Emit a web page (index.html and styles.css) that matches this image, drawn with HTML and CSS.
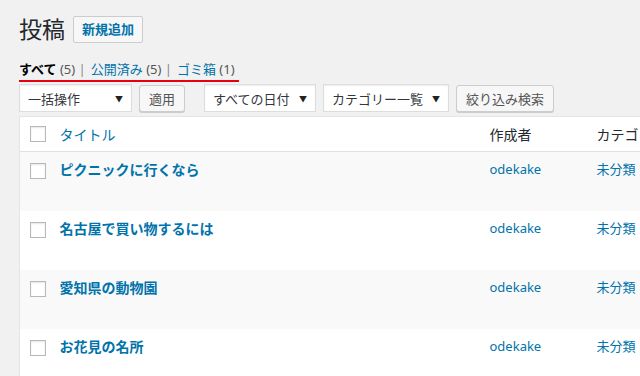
FILE: index.html
```html
<!DOCTYPE html>
<html lang="ja">
<head>
    <meta charset="UTF-8">
    <meta name="viewport" content="width=device-width, initial-scale=1.0">
    <title>投稿</title>
    <link rel="stylesheet" href="styles.css">
</head>
<body>
    <div class="wrap">
        <div class="page-head">
            <h1>投稿</h1>
            <a class="add-new" href="#">新規追加</a>
        </div>

        <ul class="subsubsub">
            <li><a class="current" href="#">すべて <span class="count">(5)</span></a> |</li>
            <li><a href="#">公開済み <span class="count">(5)</span></a> |</li>
            <li><a href="#">ゴミ箱 <span class="count">(1)</span></a></li>
        </ul>

        <div class="tablenav">
            <div class="actions">
                <div class="select bulk">一括操作<span class="arrow">▼</span></div>
                <button class="button">適用</button>
            </div>
            <div class="actions">
                <div class="select dates">すべての日付<span class="arrow">▼</span></div>
                <div class="select cats">カテゴリー一覧<span class="arrow">▼</span></div>
                <button class="button">絞り込み検索</button>
            </div>
        </div>

        <table class="posts">
            <colgroup>
                <col class="col-cb">
                <col class="col-title">
                <col class="col-author">
                <col class="col-cat">
            </colgroup>
            <thead>
                <tr>
                    <th class="check"><span class="cb"></span></th>
                    <th><a href="#">タイトル</a></th>
                    <th>作成者</th>
                    <th>カテゴリー</th>
                </tr>
            </thead>
            <tbody>
                <tr class="alt">
                    <td class="check"><span class="cb"></span></td>
                    <td><a class="row-title" href="#">ピクニックに行くなら</a></td>
                    <td><a href="#">odekake</a></td>
                    <td><a href="#">未分類</a></td>
                </tr>
                <tr>
                    <td class="check"><span class="cb"></span></td>
                    <td><a class="row-title" href="#">名古屋で買い物するには</a></td>
                    <td><a href="#">odekake</a></td>
                    <td><a href="#">未分類</a></td>
                </tr>
                <tr class="alt">
                    <td class="check"><span class="cb"></span></td>
                    <td><a class="row-title" href="#">愛知県の動物園</a></td>
                    <td><a href="#">odekake</a></td>
                    <td><a href="#">未分類</a></td>
                </tr>
                <tr>
                    <td class="check"><span class="cb"></span></td>
                    <td><a class="row-title" href="#">お花見の名所</a></td>
                    <td><a href="#">odekake</a></td>
                    <td><a href="#">未分類</a></td>
                </tr>
            </tbody>
        </table>
    </div>
</body>
</html>
```

FILE: styles.css
```css
body {
    margin: 0;
    background-color: #f1f1f1;
    color: #23282d;
    font-family: "Noto Sans", "Noto Sans CJK JP", sans-serif;
    font-size: 13px;
    overflow: hidden;
}

a {
    color: #0073aa;
    text-decoration: none;
}

.wrap {
    padding: 16px 0 0 19px;
    width: 720px;
}

.page-head {
    display: flex;
    align-items: center;
    gap: 8px;
    height: 27px;
}

h1 {
    margin: 0;
    font-size: 23px;
    font-weight: 400;
    line-height: 27px;
}

.add-new {
    display: inline-block;
    height: 25px;
    line-height: 25px;
    padding: 0 8px;
    border: 1px solid #ccc;
    border-radius: 2px;
    background-color: #f7f7f7;
    font-size: 13px;
    font-weight: 700;
}

.subsubsub {
    display: inline-flex;
    gap: 5px;
    margin: 17px 0 0;
    padding: 0 4px 2px 0;
    list-style: none;
    line-height: 18px;
    color: #888;
    border-bottom: 2px solid #e60012;
}

.subsubsub .current {
    color: #000;
    font-weight: 700;
}

.subsubsub .count {
    color: #555;
    font-weight: 400;
}

.tablenav {
    display: flex;
    gap: 19px;
    margin-top: 2px;
    height: 28px;
}

.actions {
    display: flex;
    gap: 7px;
}

.select {
    display: flex;
    justify-content: space-between;
    align-items: center;
    box-sizing: border-box;
    height: 28px;
    padding: 0 8px;
    border: 1px solid #ddd;
    background-color: #fff;
    font-size: 13px;
    color: #32373c;
    box-shadow: inset 0 1px 2px rgba(0, 0, 0, 0.07);
}

.select .arrow {
    font-size: 8px;
    color: #222;
}

.bulk { width: 113px; }
.dates { width: 112px; }
.cats { width: 126px; }

.button {
    height: 27px;
    margin-top: 1px;
    padding: 0 9px;
    border: 1px solid #ccc;
    border-radius: 3px;
    background-color: #f7f7f7;
    box-shadow: 0 1px 0 #ccc;
    color: #555;
    font-family: inherit;
    font-size: 13px;
}

.posts {
    margin-top: 4px;
    width: 720px;
    table-layout: fixed;
    border-collapse: collapse;
    border: 1px solid #e5e5e5;
    background-color: #fff;
}

.col-cb { width: 30px; }
.col-title { width: 430px; }
.col-author { width: 107px; }
.col-cat { width: 153px; }

th, td {
    padding: 0 10px;
    text-align: left;
    vertical-align: top;
}

thead th {
    height: 34px;
    vertical-align: middle;
    font-weight: 400;
    font-size: 14px;
    border-bottom: 1px solid #e1e1e1;
}

tbody td {
    height: 59px;
    box-sizing: border-box;
    padding-top: 8px;
    line-height: 19px;
}

tbody tr.alt {
    background-color: #f9f9f9;
}

.check {
    padding: 0 0 0 10px;
}

tbody .check {
    padding-top: 11px;
}

.cb {
    display: block;
    width: 14px;
    height: 14px;
    border: 1px solid #b4b9be;
    background-color: #fff;
    box-shadow: inset 0 1px 2px rgba(0, 0, 0, 0.1);
}

.row-title {
    font-size: 14px;
    font-weight: 700;
}
```
